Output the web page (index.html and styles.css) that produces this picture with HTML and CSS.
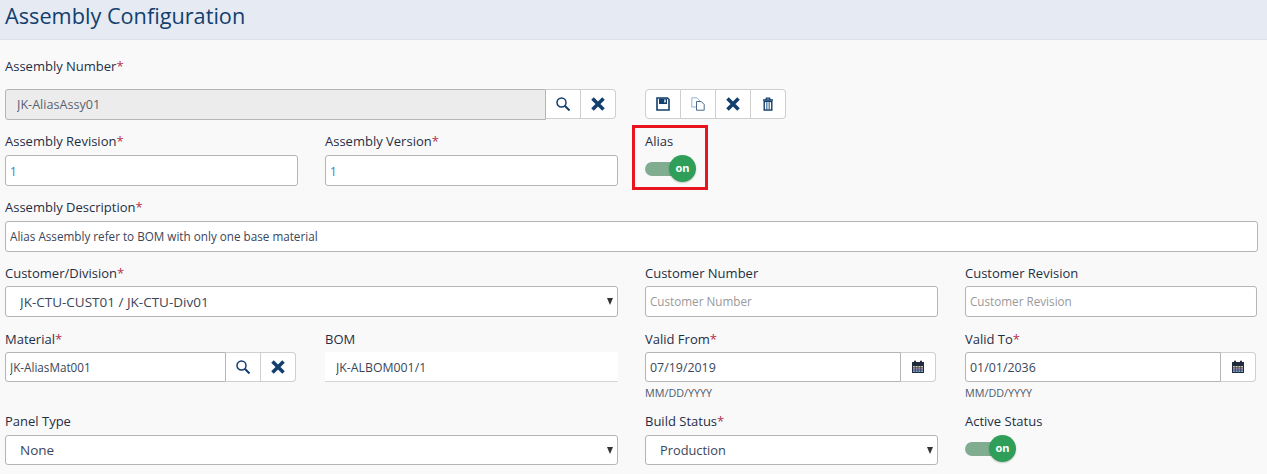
FILE: index.html
```html
<!DOCTYPE html>
<html lang="en">
<head>
<meta charset="utf-8">
<title>Assembly Configuration</title>
<link rel="stylesheet" href="styles.css">
</head>
<body>
<svg class="defs" width="0" height="0" aria-hidden="true">
  <symbol id="i-search" viewBox="0 0 14 14"><circle cx="5.500" cy="5.500" r="4.500" fill="none" stroke="#123f6d" stroke-width="1.500"/><path d="M8.800 8.800 13.500 13.500" stroke="#123f6d" stroke-width="2" fill="none"/></symbol>
  <symbol id="i-x" viewBox="0 0 14 14"><path d="M1.500 1.500 12.500 12.500M12.500 1.500 1.500 12.500" stroke="#123f6d" stroke-width="3.600" fill="none"/></symbol>
  <symbol id="i-save" viewBox="0 0 14 14"><path d="M1 1h10.500L13 2.500V13H1z" fill="#fff" stroke="#123f6d" stroke-width="1.600"/><path d="M3 1.500h8v5.500H3z" fill="#123f6d"/><path d="M8.200 2.500h1.600v3H8.200z" fill="#dfe6ee"/></symbol>
  <symbol id="i-copy" viewBox="0 0 14 14"><path d="M.8 .8h5.200l2.500 2.500v6.700H.8z" fill="#fff" stroke="#8fb5d8"/><path d="M5.500 4.500h4.700l3 3v5.700H5.500z" fill="#fff" stroke="#4b6a8a"/></symbol>
  <symbol id="i-trash" viewBox="0 0 14 14"><path d="M2 3h10M5.300 3V1.200h3.400V3" fill="none" stroke="#123f6d" stroke-width="1.300"/><path d="M3.200 4.500h7.600V13H3.200z" fill="#fff" stroke="#123f6d" stroke-width="1.400"/><path d="M5.500 5.500v6.500M7 5.500v6.500M8.500 5.500v6.500" stroke="#3f6c94" stroke-width=".8"/></symbol>
  <symbol id="i-cal" viewBox="0 0 14 14"><path d="M1 2h12v11H1z" fill="#1f2b3d"/><path d="M3 .8h2v2.500H3zM9 .8h2v2.500H9z" fill="#1f2b3d"/><path d="M2 6h10v1.500H2z" fill="#d4c9a8"/><path d="M2 8.200h10v1.500H2z" fill="#b9a0c8"/><path d="M2 10.400h10v1.500H2z" fill="#8fb8e0"/><path d="M4.300 6v6M7 6v6M9.700 6v6" stroke="#1f2b3d" stroke-width=".7"/></symbol>
</svg>

<header class="page-header"><h1 class="page-title">Assembly Configuration</h1></header>

<main class="form">
  <div class="row row-first">
    <div class="field span-2">
      <label class="label">Assembly Number<span class="req">*</span></label>
      <div class="group group-wide">
        <input class="input input-disabled grow" value="JK-AliasAssy01" readonly>
        <div class="btns">
          <button class="btn"><svg class="ico"><use href="#i-search"/></svg></button>
          <button class="btn"><svg class="ico"><use href="#i-x"/></svg></button>
        </div>
      </div>
    </div>
    <div class="field toolbar-cell">
      <div class="btns toolbar">
        <button class="btn"><svg class="ico"><use href="#i-save"/></svg></button>
        <button class="btn"><svg class="ico"><use href="#i-copy"/></svg></button>
        <button class="btn"><svg class="ico"><use href="#i-x"/></svg></button>
        <button class="btn"><svg class="ico"><use href="#i-trash"/></svg></button>
      </div>
    </div>
  </div>

  <div class="row">
    <div class="field">
      <label class="label">Assembly Revision<span class="req">*</span></label>
      <input class="input input-blue" value="1">
    </div>
    <div class="field">
      <label class="label">Assembly Version<span class="req">*</span></label>
      <input class="input input-blue" value="1">
    </div>
    <div class="field alias-field">
      <label class="label">Alias</label>
      <div class="toggle"><span class="knob">on</span></div>
      <div class="highlight"></div>
    </div>
  </div>

  <div class="row">
    <div class="field span-4">
      <label class="label">Assembly Description<span class="req">*</span></label>
      <input class="input input-raised" value="Alias Assembly refer to BOM with only one base material">
    </div>
  </div>

  <div class="row row-snug">
    <div class="field span-2">
      <label class="label">Customer/Division<span class="req">*</span></label>
      <div class="select-wrap"><select class="select select-wide"><option>JK-CTU-CUST01 / JK-CTU-Div01</option></select></div>
    </div>
    <div class="field">
      <label class="label">Customer Number</label>
      <input class="input input-raised" placeholder="Customer Number">
    </div>
    <div class="field field-short">
      <label class="label">Customer Revision</label>
      <input class="input input-raised" placeholder="Customer Revision">
    </div>
  </div>

  <div class="row row-dates">
    <div class="field">
      <label class="label">Material<span class="req">*</span></label>
      <div class="group">
        <input class="input grow" value="JK-AliasMat001">
        <div class="btns">
          <button class="btn"><svg class="ico"><use href="#i-search"/></svg></button>
          <button class="btn"><svg class="ico"><use href="#i-x"/></svg></button>
        </div>
      </div>
    </div>
    <div class="field">
      <label class="label">BOM</label>
      <input class="input input-plain" value="JK-ALBOM001/1" readonly>
    </div>
    <div class="field">
      <label class="label">Valid From<span class="req">*</span></label>
      <div class="group">
        <input class="input input-date grow" value="07/19/2019">
        <div class="btns"><button class="btn"><svg class="ico"><use href="#i-cal"/></svg></button></div>
      </div>
      <div class="hint">MM/DD/YYYY</div>
    </div>
    <div class="field">
      <label class="label">Valid To<span class="req">*</span></label>
      <div class="group">
        <input class="input input-date grow" value="01/01/2036">
        <div class="btns"><button class="btn"><svg class="ico"><use href="#i-cal"/></svg></button></div>
      </div>
      <div class="hint">MM/DD/YYYY</div>
    </div>
  </div>

  <div class="row row-last">
    <div class="field span-2">
      <label class="label">Panel Type</label>
      <div class="select-wrap"><select class="select select-wide"><option>None</option></select></div>
    </div>
    <div class="field">
      <label class="label">Build Status<span class="req">*</span></label>
      <div class="select-wrap"><select class="select"><option>Production</option></select></div>
    </div>
    <div class="field">
      <label class="label">Active Status</label>
      <div class="toggle"><span class="knob">on</span></div>
    </div>
  </div>
</main>
</body>
</html>
```

FILE: styles.css
```css
* { box-sizing: border-box; }
html, body { margin: 0; padding: 0; }
body {
  width: 1267px;
  height: 474px;
  overflow: hidden;
  background: #f9f9f9;
  font-family: "Open Sans", "Liberation Sans", sans-serif;
  font-size: 13px;
  color: #1f2f46;
}
.defs { position: absolute; }
.page-header {
  height: 40px;
  background: #e6eaf3;
  border-bottom: 1px solid #dcdfe6;
  padding-left: 5px;
}
.page-title {
  margin: 0;
  font-size: 21.700px;
  font-weight: 400;
  line-height: 32px;
  color: #123f6d;
}
.form { padding: 16px 9px 0 5px; }
.row {
  display: grid;
  grid-template-columns: repeat(4, 293px);
  column-gap: 27px;
  margin-bottom: 11px;
}
.row-snug { margin-bottom: 12px; }
.row-dates { margin-bottom: 10px; }
.field { position: relative; min-width: 0; }
.field-short { width: 292px; }
.span-2 { grid-column: span 2; }
.span-4 { grid-column: span 4; }
.label {
  display: block;
  height: 20px;
  line-height: 20px;
  margin-bottom: 4px;
  font-weight: 500;
}
.row-first .label { margin-bottom: 13px; }
.row-snug .label, .row-dates .label { margin-bottom: 3px; }
.req { color: #b5304a; }
.toolbar-cell { padding-top: 33px; }
.group { display: flex; align-items: flex-start; width: 291px; }
.group-wide { width: 611px; }
.grow { flex: 1 1 0; min-width: 0; }
.input {
  display: block;
  width: 100%;
  height: 31px;
  padding: 0 4px;
  border: 1px solid #b5b5b5;
  border-radius: 3px;
  background: #fff;
  font: inherit;
  font-size: 11.700px;
  color: #3a4658;
  outline: none;
}
.input-raised { padding-bottom: 2px; }
.row-dates .input { height: 30px; }
.input::placeholder { color: #999; opacity: 1; }
.input-blue { color: #2f7cc4; }
.input-date { font-size: 12.400px; }
.input-disabled { background: #ececec; padding-left: 11px; color: #5a6270; font-size: 12.600px; }
.row-dates .input-plain {
  border: 0;
  border-bottom: 1px solid #d5d5d5;
  border-radius: 0;
  padding: 2px 4px 0 11px;
  font-size: 12.300px;
}
.group > .input { border-radius: 3px 0 0 3px; }
.btns { display: inline-flex; flex: none; }
.btn {
  width: 35px;
  height: 30px;
  padding: 0;
  display: flex;
  align-items: center;
  justify-content: center;
  background: #fff;
  border: 1px solid #cfcfcf;
  border-left-width: 0;
}
.btns .btn:last-child { border-radius: 0 4px 4px 0; }
.toolbar .btn:first-child { width: 36px; border-left-width: 1px; border-radius: 4px 0 0 4px; }
.ico { width: 14px; height: 14px; }
.select-wrap { position: relative; }
.select-wrap::after {
  content: "";
  position: absolute;
  right: 5px;
  top: 12px;
  border-left: 3.500px solid transparent;
  border-right: 3.500px solid transparent;
  border-top: 7px solid #333;
}
.select {
  display: block;
  width: 100%;
  height: 31px;
  padding: 0 14px;
  appearance: none;
  border: 1px solid #b5b5b5;
  border-radius: 3px;
  background: #fff;
  font: inherit;
  font-size: 12.800px;
  color: #3a4658;
}
.select-wide { font-size: 13.500px; }
.row-last .select { height: 30px; }
.hint {
  height: 17px;
  margin-top: 2px;
  line-height: 17px;
  font-size: 10.800px;
  color: #4a5a70;
}
.toggle {
  position: relative;
  width: 51px;
  height: 27px;
}
.toggle::before {
  content: "";
  position: absolute;
  left: 0;
  top: 7px;
  width: 36px;
  height: 14px;
  border-radius: 7px;
  background: #80ad90;
}
.knob {
  position: absolute;
  right: 0;
  top: 0;
  width: 27px;
  height: 27px;
  border-radius: 50%;
  background: #2f9e58;
  color: #fff;
  font-size: 11px;
  font-weight: 700;
  line-height: 25px;
  text-align: center;
  box-shadow: 0 1px 2px rgba(0,0,0,.2);
}
.highlight {
  position: absolute;
  left: -13px;
  top: -6px;
  width: 76px;
  height: 65px;
  border: 3px solid #e8141f;
  pointer-events: none;
}
```
